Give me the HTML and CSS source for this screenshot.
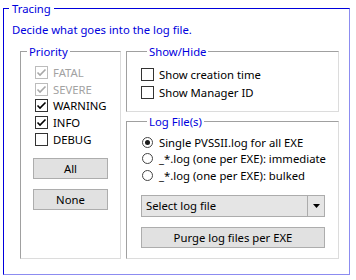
FILE: index.html
```html
<!DOCTYPE html>
<html lang="en">
<head>
    <meta charset="UTF-8">
    <title>Tracing</title>
    <link rel="stylesheet" href="styles.css">
</head>
<body>
    <fieldset class="tracing">
        <legend>Tracing</legend>
        <p class="intro">Decide what goes into the log file.</p>

        <div class="groups">
            <!-- Priority -->
            <fieldset class="box priority">
                <legend>Priority</legend>
                <div class="opts">
                    <div class="opt disabled">
                        <span class="check"><svg width="11" height="11" viewBox="0 0 11 11"><polyline points="1.5,5.5 4,8 9.5,2.5" /></svg></span>FATAL
                    </div>
                    <div class="opt disabled">
                        <span class="check"><svg width="11" height="11" viewBox="0 0 11 11"><polyline points="1.5,5.5 4,8 9.5,2.5" /></svg></span>SEVERE
                    </div>
                    <div class="opt">
                        <span class="check"><svg width="11" height="11" viewBox="0 0 11 11"><polyline points="1.5,5.5 4,8 9.5,2.5" /></svg></span>WARNING
                    </div>
                    <div class="opt">
                        <span class="check"><svg width="11" height="11" viewBox="0 0 11 11"><polyline points="1.5,5.5 4,8 9.5,2.5" /></svg></span>INFO
                    </div>
                    <div class="opt">
                        <span class="check"></span>DEBUG
                    </div>
                </div>
                <div class="btn small">All</div>
                <div class="btn small">None</div>
            </fieldset>

            <div class="side">
                <!-- Show/Hide -->
                <fieldset class="box showhide">
                    <legend>Show/Hide</legend>
                    <div class="opt tall"><span class="check"></span>Show creation time</div>
                    <div class="opt tall"><span class="check"></span>Show Manager ID</div>
                </fieldset>

                <!-- Log files -->
                <fieldset class="box logfiles">
                    <legend>Log File(s)</legend>
                    <div class="radios">
                        <div class="radio-row"><span class="radio on"></span>Single PVSSII.log for all EXE</div>
                        <div class="radio-row"><span class="radio"></span>_*.log (one per EXE): immediate</div>
                        <div class="radio-row"><span class="radio"></span>_*.log (one per EXE): bulked</div>
                    </div>
                    <div class="combo">
                        <span class="combo-text">Select log file</span>
                        <span class="combo-arrow"><svg width="7" height="4" viewBox="0 0 7 4"><polygon points="0 0, 7 0, 3.5 4" /></svg></span>
                    </div>
                    <div class="btn wide">Purge log files per EXE</div>
                </fieldset>
            </div>
        </div>
    </fieldset>
</body>
</html>
```

FILE: styles.css
```css
body {
    margin: 0;
    font-family: "Noto Sans", "Open Sans", sans-serif;
    font-size: 11.3px;
    color: #000;
    background-color: #fff;
}
fieldset {
    box-sizing: border-box;
    min-width: 0;
    margin: 0;
    border: 1px solid;
}
legend {
    line-height: 17px;
    height: 17px;
    color: #0000dd;
}
.tracing {
    margin-left: 3px;
    width: 347px;
    height: 275px;
    padding: 5px 10px 15px 8px;
    border-color: #0000dd #8c8cf0 #8c8cf0 #0000dd;
}
.tracing > legend {
    margin-left: -3px;
    padding: 0 3px;
}
.intro {
    margin: 0;
    line-height: 16px;
    color: #0000dd;
}
.groups {
    display: flex;
    gap: 5px;
    margin: 5px 0 0 8px;
}
.box {
    padding: 0;
    border-color: #a0a0a0 #dcdcdc #dcdcdc #a0a0a0;
}
.box > legend {
    margin-left: 6px;
    padding: 0 2px;
}
.priority {
    width: 101px;
    height: 216px;
    padding-left: 11px;
}
.priority > legend {
    margin-left: -5px;
}
.opts {
    padding: 4px 0 0 3px;
}
.opt {
    display: flex;
    align-items: center;
    height: 16.75px;
    white-space: nowrap;
}
.opt.tall {
    height: 18px;
}
.check {
    box-sizing: border-box;
    width: 13px;
    height: 13px;
    margin-right: 5px;
    border: 1px solid #333;
    background-color: #fff;
    display: flex;
    align-items: center;
    justify-content: center;
    flex-shrink: 0;
}
.check polyline {
    fill: none;
    stroke: #000;
    stroke-width: 1.6;
}
.opt.disabled {
    color: #a2a2a2;
}
.opt.disabled .check {
    border-color: #bcbcbc;
}
.opt.disabled polyline {
    stroke: #a8a8a8;
}
.btn {
    box-sizing: border-box;
    height: 21px;
    line-height: 19px;
    text-align: center;
    background-color: #e1e1e1;
    border: 1px solid #adadad;
}
.btn.small {
    width: 75px;
    margin: 10px 0 0 1px;
}
.side {
    display: flex;
    flex-direction: column;
    gap: 1px;
    width: 213px;
}
.showhide {
    height: 69px;
    padding: 5px 0 0 14px;
}
.logfiles {
    height: 146px;
    padding: 4px 0 0 14px;
}
.radio-row {
    display: flex;
    align-items: center;
    height: 16.5px;
    white-space: nowrap;
}
.radio {
    box-sizing: border-box;
    width: 11px;
    height: 11px;
    margin: 0 6px 0 1px;
    border: 1px solid #444;
    border-radius: 50%;
    display: flex;
    align-items: center;
    justify-content: center;
}
.radio.on::after {
    content: "";
    width: 5px;
    height: 5px;
    border-radius: 50%;
    background-color: #1a1a1a;
}
.combo {
    box-sizing: border-box;
    display: flex;
    width: 184px;
    height: 22px;
    margin-top: 11px;
    background-color: #e5e5e5;
    border: 1px solid #acacac;
}
.combo-text {
    flex: 1;
    padding-left: 4px;
    line-height: 20px;
}
.combo-arrow {
    width: 16px;
    border-left: 1px solid #acacac;
    display: flex;
    align-items: center;
    justify-content: center;
}
.btn.wide {
    width: 184px;
    margin-top: 10px;
}
```
